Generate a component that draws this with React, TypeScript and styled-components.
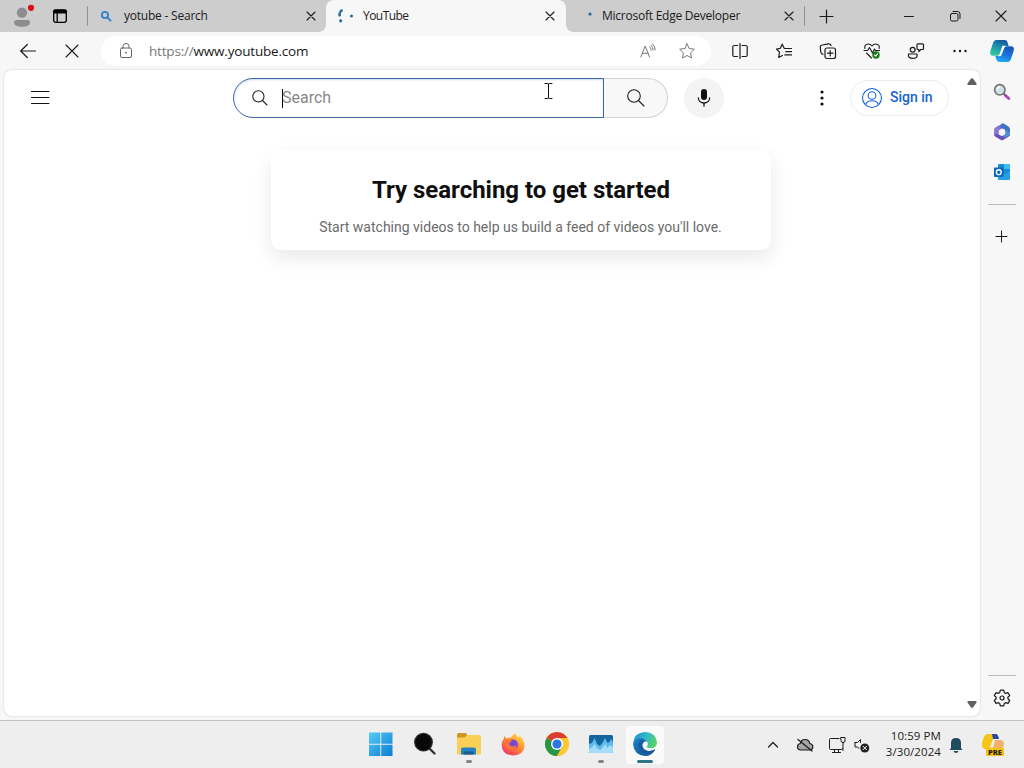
import React from 'react';
import styled, { createGlobalStyle } from 'styled-components';

const GlobalStyle = createGlobalStyle`
    * {
        box-sizing: border-box;
    }
    body {
        margin: 0;
        overflow: hidden;
        background: #f7f7f7;
        font-family: "Open Sans", "Noto Sans", sans-serif;
        color: #1b1b1b;
    }
    svg {
        display: block;
        flex: none;
        overflow: visible;
    }
`

const Screen = styled.div`
    width: 1024px;
    height: 768px;
    display: flex;
    flex-direction: column;
`

/* every icon sits in a fixed cell so the bars keep their rhythm */
const Cell = styled.div<{ $w: number; $h?: number }>`
    width: ${p => p.$w}px;
    height: ${p => (p.$h ? `${p.$h}px` : 'auto')};
    flex: none;
    display: flex;
    align-items: center;
    justify-content: center;
`

const TabStrip = styled.div`
    height: 32px;
    flex: none;
    display: flex;
    align-items: center;
    background: #cdcdcd;
`

const StripDivider = styled.div`
    width: 1px;
    height: 20px;
    background: #929292;
`

const Tab = styled.div<{ $w: number; $active?: boolean }>`
    position: relative;
    width: ${p => p.$w}px;
    height: 32px;
    flex: none;
    display: flex;
    align-items: center;
    padding-right: 7px;
    background: ${p => (p.$active ? '#f7f7f7' : 'transparent')};
    border-radius: 8px 8px 0 0;

    &::before, &::after {
        content: '';
        display: ${p => (p.$active ? 'block' : 'none')};
        position: absolute;
        bottom: 0;
        width: 7px;
        height: 7px;
    }
    &::before {
        left: -7px;
        background: radial-gradient(circle at 0 0, transparent 6.5px, #f7f7f7 7px);
    }
    &::after {
        right: -7px;
        background: radial-gradient(circle at 100% 0, transparent 6.5px, #f7f7f7 7px);
    }
`

const TabTitle = styled.span<{ $tight?: number }>`
    flex: 1;
    font-size: 12px;
    line-height: 16px;
    letter-spacing: ${p => p.$tight ?? 0}px;
    white-space: nowrap;
`

const Toolbar = styled.div`
    height: 38px;
    flex: none;
    display: flex;
    align-items: center;
    padding-left: 6px;
    background: #f7f7f7;
`

const AddressBar = styled.div`
    width: 610px;
    height: 30px;
    margin: 0 7px 0 7px;
    display: flex;
    align-items: center;
    border-radius: 15px;
    background: #fff;
`

const Url = styled.span`
    flex: 1;
    margin-left: -2px;
    font-size: 13.5px;
    line-height: 20px;
    letter-spacing: -0.19px;
    white-space: nowrap;

    em {
        font-style: normal;
        color: #767676;
    }
`

const Main = styled.div`
    flex: 1;
    min-height: 0;
    display: flex;
    padding-left: 4px;
    background: #f7f7f7;
`

const Page = styled.div`
    position: relative;
    width: 976px;
    margin-bottom: 4px;
    flex: none;
    display: flex;
    border-radius: 8px;
    background: #fff;
    box-shadow: 0 0 2px rgba(0, 0, 0, 0.22);
    font-family: Roboto, sans-serif;
`

const PageBody = styled.div`
    flex: 1;
    display: flex;
    flex-direction: column;
`

const Masthead = styled.header`
    height: 56px;
    display: flex;
    align-items: center;
    padding-left: 16px;
`

const SearchForm = styled.div`
    display: flex;
    height: 40px;
    margin-left: 173px;
`

const SearchInput = styled.div`
    width: 371px;
    display: flex;
    align-items: center;
    border: 1px solid #3c66a6;
    border-radius: 20px 0 0 20px;
    background: #fff;
    box-shadow: inset 0 1px 2px #c9dcf0;
    font-size: 16px;
    line-height: 24px;
    color: #888;
`

const Caret = styled.i`
    width: 1px;
    height: 19px;
    margin-right: -1px;
    background: #000;
`

const SearchButton = styled.div`
    width: 64px;
    display: flex;
    align-items: center;
    justify-content: center;
    border: 1px solid #d3d3d3;
    border-left: 0;
    border-radius: 0 20px 20px 0;
    background: #f8f8f8;
`

const MicButton = styled.div`
    width: 40px;
    height: 40px;
    margin-left: 16px;
    display: flex;
    align-items: center;
    justify-content: center;
    border-radius: 50%;
    background: #f4f4f4;
`

const SignIn = styled.div`
    width: 99px;
    height: 36px;
    margin-left: 8px;
    padding-left: 9px;
    display: flex;
    align-items: center;
    gap: 6px;
    border: 1px solid #ececec;
    border-radius: 18px;
    font-size: 14px;
    font-weight: 500;
    line-height: 34px;
    color: #1363d2;

    span {
        margin-top: -2px;
    }
`

const Card = styled.section`
    width: 500px;
    height: 100px;
    margin: 24px 0 0 267px;
    padding-top: 22px;
    border-radius: 10px;
    background: #fff;
    box-shadow: 0 8px 20px rgba(0, 0, 0, 0.09);
    text-align: center;

    h1 {
        margin: 0;
        font-size: 24px;
        line-height: 36px;
        font-weight: 700;
        letter-spacing: -0.02px;
        color: #0f0f0f;
    }
    p {
        margin: 8px 0 0 -1px;
        font-size: 14px;
        line-height: 22px;
        color: #6b6b6b;
    }
`

const Scrollbar = styled.div`
    width: 16px;
    display: flex;
    flex-direction: column;
    justify-content: space-between;
    align-items: center;
    padding: 8px 0;
`

const Pointer = styled.div`
    position: absolute;
    left: 540px;
    top: 13px;
`

const Sidebar = styled.aside`
    flex: 1;
    display: flex;
    flex-direction: column;
    align-items: center;
    padding-top: 2px;
`

const SideDivider = styled.div`
    width: 28px;
    height: 1px;
    flex: none;
    background: #bdbdbd;
`

const Spacer = styled.div`
    flex: 1;
`

const Taskbar = styled.footer`
    height: 48px;
    flex: none;
    display: flex;
    align-items: center;
    padding-left: 359px;
    border-top: 1px solid #c2c2c2;
    background: #eee;
`

const TaskButton = styled.div<{ $active?: boolean }>`
    width: 38px;
    height: 38px;
    margin: 0 3px;
    display: flex;
    flex-direction: column;
    align-items: center;
    padding-top: 6px;
    border-radius: 4px;
    background: ${p => (p.$active ? '#fafafa' : 'transparent')};
`

const Indicator = styled.i<{ $state?: string }>`
    width: ${p => (p.$state === 'active' ? 16 : 6)}px;
    height: 3px;
    margin-top: 4px;
    border-radius: 2px;
    background: ${p => (p.$state === 'active' ? '#2b7489' : p.$state === 'open' ? '#858585' : 'transparent')};
`

const Clock = styled.div`
    width: 67px;
    margin-top: -2px;
    font-size: 11.5px;
    line-height: 16px;
    letter-spacing: 0.08px;
    text-align: right;
    white-space: nowrap;
`

type IconProps = {
    w?: number
    h?: number
    color?: string
    sw?: number
    children: React.ReactNode
}

function Icon({ w = 16, h = w, color = '#1b1b1b', sw = 1, children }: IconProps) {
    return (
        <svg width={w} height={h} viewBox={`0 0 ${w} ${h}`} fill="none" stroke={color} strokeWidth={sw} strokeLinecap="round" strokeLinejoin="round">
            {children}
        </svg>
    )
}

const Cross = ({ size = 8, sw = 1.1 }: { size?: number; sw?: number }) => (
    <Icon w={size} sw={sw}><path d={`M0 0L${size} ${size}M${size} 0L0 ${size}`} /></Icon>
)

const STAR = 'M8 .8l2.2 4.7 5.1.7-3.7 3.6.9 5.2L8 12.5 3.5 15l.9-5.2L.7 6.2l5.1-.7z'

function BrowserTabs() {
    return (
        <TabStrip>
            <Cell $w={46}>
                <Icon w={20} h={22} color="none">
                    <circle cx="9" cy="7.6" r="5.2" fill="#8d8d8d" />
                    <path d="M1 17.500q0-2.500 2.500-2.500h11q2.500 0 2.500 2.500c0 3-4 4.300-8 4.300s-8-1.300-8-4.300z" fill="#8d8d8d" />
                    <circle cx="18" cy="2.800" r="3.100" fill="#d80d1e" />
                </Icon>
            </Cell>
            <Cell $w={28}>
                <Icon w={14} h={14} sw={1.3} color="#000">
                    <rect x=".7" y=".9" width="12.6" height="12.4" rx="2" />
                    <path d="M1 1.300h12v2.600H1z" fill="#000" />
                    <path d="M4.200 4v9" />
                </Icon>
            </Cell>
            <Cell $w={13} />
            <StripDivider />
            <Tab $w={238}>
                <Cell $w={36}>
                    <Icon w={10} sw={1.900} color="#3b7fcf"><circle cx="4" cy="4" r="3.100" /><path d="M6.300 6.300l3.300 3.300" /></Icon>
                </Cell>
                <TabTitle $tight={-0.22}>yotube - Search</TabTitle>
                <Cell $w={16}><Cross /></Cell>
            </Tab>
            <Tab $w={240} $active>
                <Cell $w={37}>
                    <Icon w={16} sw={2.600} color="#246b99">
                        <path d="M4.600 2.700L3.600 3.300M2.600 5.600L2.700 7.300" />
                        <circle cx="3.700" cy="12.800" r="1.600" fill="#246b99" stroke="none" />
                        <circle cx="14.500" cy="8" r="1.500" fill="#246b99" stroke="none" />
                    </Icon>
                </Cell>
                <TabTitle $tight={-0.55}>YouTube</TabTitle>
                <Cell $w={18}><Cross /></Cell>
            </Tab>
            <Tab $w={238}>
                <Cell $w={36}>
                    <Icon w={16}><circle cx="14" cy="6" r="1.600" fill="#20689b" stroke="none" /></Icon>
                </Cell>
                <TabTitle $tight={-0.24}>Microsoft Edge Developer</TabTitle>
                <Cell $w={16}><Cross /></Cell>
            </Tab>
            <StripDivider />
            <Cell $w={43}><Icon w={13} sw={1.200}><path d="M6.500 0v13M0 6.500h13" /></Icon></Cell>
            <Spacer />
            <Cell $w={46}><Icon w={10}><path d="M.5 5.500h9" /></Icon></Cell>
            <Cell $w={46}>
                <Icon w={10}><rect x=".5" y="2.500" width="7.500" height="7.500" rx="1.500" /><path d="M3 .5h4.500q2.500 0 2.500 2.500v4.500" /></Icon>
            </Cell>
            <Cell $w={46}><Cross size={10} /></Cell>
        </TabStrip>
    )
}

function BrowserToolbar() {
    return (
        <Toolbar>
            <Cell $w={44}><Icon w={16} sw={1.200}><path d="M15.500 8H.7M7.300 1.500L.7 8l6.600 6.500" /></Icon></Cell>
            <Cell $w={44}><Cross size={12} /></Cell>
            <AddressBar>
                <Cell $w={50}>
                    <Icon w={12} h={16} color="#666">
                        <rect x=".5" y="5" width="11" height="9.500" rx="1.500" />
                        <path d="M3 5V3.300q0-2.800 3-2.800t3 2.800V5" />
                        <circle cx="6" cy="9.700" r=".5" fill="#666" />
                    </Icon>
                </Cell>
                <Url><em>https://</em>www.youtube.com</Url>
                <Cell $w={41}>
                    <Icon w={16} color="#777">
                        <path d="M.8 14L5.200 3l4.400 11M2.500 10.300h5.600M9.800 4q1.400 1.200 1.400 3.200M11 2.300q2.200 1.900 2.200 4.700M12.500.8q2.700 2.400 2.700 6" />
                    </Icon>
                </Cell>
                <Cell $w={37}><Icon color="#777"><path d={STAR} /></Icon></Cell>
                <Cell $w={6} />
            </AddressBar>
            <Cell $w={43}>
                <Icon w={16} sw={1.200}>
                    <path d="M5.500 2.500H2.300q-1.500 0-1.500 1.500v8q0 1.500 1.500 1.500h3.200M10 2.500h3.700q1.500 0 1.500 1.500v8q0 1.500-1.500 1.500H10M8 .5v15" />
                </Icon>
            </Cell>
            <Cell $w={45}>
                <Icon w={16} sw={1.200}>
                    <path d="M9.700 5.500L8.200 5.300 6.200 1.200 4.300 5.300.5 6l3 3.200-.8 5.300 3.700-2M9.800 5.500h5.700M9.800 8.700h5.700M8.800 11.900h6.700" />
                </Icon>
            </Cell>
            <Cell $w={44}>
                <Icon w={16} sw={1.200}>
                    <rect x="5" y="5" width="10.500" height="10.500" rx="2" />
                    <path d="M10.200 7.500v5.500M7.500 10.200H13M3 11.400Q1 11 .7 8.500L.3 4.500Q.2 2.300 2.300 2L8.500.8q2-.2 2.600 1.700" />
                </Icon>
            </Cell>
            <Cell $w={44}>
                <Icon w={16} sw={1.100}>
                    <path d="M.9 5.500Q0 2 3.200 1.200 6 .5 8 3q2-2.500 4.800-1.800 3.200.8 2.300 4.300M0 7.500h3.500l2-3 3 5.500 2-4 1 1.500H15.500M2.500 10l5 5" />
                    <circle cx="12" cy="12" r="3.700" fill="#187b18" stroke="none" />
                    <path d="M10.500 12l1.100 1.200 2-2.300" stroke="#fff" />
                </Icon>
            </Cell>
            <Cell $w={44}>
                <Icon w={16} sw={1.200}>
                    <circle cx="4.700" cy="6.800" r="2.400" />
                    <path d="M.5 11h8.600v1.200q0 3.200-4.300 3.200T.5 12.200zM9 1.800q0-1 1-1h4.500q1 0 1 1v3.700q0 1-1 1h-1.700l-2 2V6.500H10q-1 0-1-1z" />
                </Icon>
            </Cell>
            <Cell $w={44}>
                <Icon w={14} h={4} color="none"><g fill="#1b1b1b"><circle cx="1.500" cy="2" r="1.200" /><circle cx="7" cy="2" r="1.200" /><circle cx="12.500" cy="2" r="1.200" /></g></Icon>
            </Cell>
            <Cell $w={40}><CopilotLogo /></Cell>
        </Toolbar>
    )
}

function CopilotLogo() {
    return (
        <svg width="24" height="22" viewBox="0 0 24 22">
            <defs>
                <linearGradient id="cpA" x1=".6" y1="0" x2=".2" y2="1"><stop offset="0" stopColor="#155a9c" /><stop offset=".4" stopColor="#1b8fae" /><stop offset="1" stopColor="#35cf9c" /></linearGradient>
                <linearGradient id="cpB" x1=".6" y1="0" x2=".3" y2="1"><stop offset="0" stopColor="#1b53b8" /><stop offset=".5" stopColor="#1870df" /><stop offset="1" stopColor="#22aef2" /></linearGradient>
            </defs>
            <path d="M6.500 0h8.300q2 0 2.700 2.300L18.700 6H15q-2.300 0-3 2.300l-2 5.200q-.8 2.300-3 2.300H3.200Q-.8 15.800.3 11.300L3 3Q4 0 6.500 0z" fill="url(#cpA)" />
            <path d="M17.500 22H9.200q-2 0-2.700-2.300L5.300 16H9q2.300 0 3-2.300l2-5.200q.8-2.300 3-2.300h3.800q4 0 2.900 4.500L21 19q-1 3-3.500 3z" fill="url(#cpB)" />
            <path d="M12.300 5.800h3.200q-1.200.8-1.700 2.400l-2 5.800q-.5 1.500-1.500 2.200H8.200q1-.8 1.400-2l2-6q.3-1.300.7-2.400z" fill="#f4fafa" />
        </svg>
    )
}

function YouTubePage() {
    return (
        <Page>
            <PageBody>
                <Masthead>
                    <Cell $w={40} $h={40}>
                        <Icon w={18} h={14} color="#111"><path d="M.5 .5h17.500M.5 6.500h17.500M.5 12.500h17.500" /></Icon>
                    </Cell>
                    <SearchForm>
                        <SearchInput>
                            <Cell $w={48}>
                                <Cell $w={3} />
                                <Icon w={16} color="#222" sw={1.100}><circle cx="6.400" cy="6.400" r="5.600" /><path d="M10.500 10.500l4.500 4.500" /></Icon>
                            </Cell>
                            <Caret />
                            Search
                        </SearchInput>
                        <SearchButton><Icon w={18} sw={1.100}><circle cx="7" cy="7" r="6.300" /><path d="M11.500 11.500l5.500 5.500" /></Icon></SearchButton>
                    </SearchForm>
                    <MicButton>
                        <Icon w={16} h={20} sw={1.300} color="#111">
                            <rect x="5" y="1" width="6" height="11" rx="3" fill="#111" stroke="none" />
                            <path d="M2.300 9.500c0 7.300 11.400 7.300 11.400 0M8 15v3.500" strokeLinecap="butt" />
                        </Icon>
                    </MicButton>
                    <Cell $w={78} />
                    <Cell $w={40}>
                        <Icon w={4} h={16} color="none"><g fill="#111"><circle cx="2" cy="2" r="1.600" /><circle cx="2" cy="8" r="1.600" /><circle cx="2" cy="14" r="1.600" /></g></Icon>
                    </Cell>
                    <SignIn>
                        <Icon w={24} color="#1363d2" sw={1.100}>
                            <circle cx="12" cy="12" r="9.500" />
                            <circle cx="12" cy="9.500" r="3.800" />
                            <path d="M5.500 18.500q1.600-3.700 6.500-3.700t6.500 3.700" />
                        </Icon>
                        <span>Sign in</span>
                    </SignIn>
                </Masthead>
                <Card>
                    <h1>Try searching to get started</h1>
                    <p>Start watching videos to help us build a feed of videos you'll love.</p>
                </Card>
            </PageBody>
            <Scrollbar>
                <Icon w={10} h={7} color="none"><path d="M3.800.8q1.200-1.300 2.400 0l3.300 4.700q.5 1.500-.7 1.500H1.200Q0 7 .5 5.500z" fill="#606060" /></Icon>
                <Icon w={10} h={8} color="none"><path d="M3.800 7.200q1.200 1.300 2.400 0l3.300-4.700Q10 1 8.800 1H1.200Q0 1 .5 2.500z" fill="#606060" /></Icon>
            </Scrollbar>
            <Pointer>
                <Icon w={8} h={16} color="#111"><path d="M1 .5h2q1 0 1.500.7.5-.7 1.500-.7h2M4.500 1v14M1 15.500h2q1 0 1.500-.7.5.7 1.500.7h2" /></Icon>
            </Pointer>
        </Page>
    )
}

function EdgeSidebar() {
    return (
        <Sidebar>
            <Cell $w={40} $h={40}>
                <svg width="18" height="18" viewBox="0 0 18 18">
                    <path d="M12.500 12.500l3.300 3" stroke="#b044c8" strokeWidth="3" strokeLinecap="round" />
                    <path d="M10.500 10.500l2 2" stroke="#666" strokeWidth="1.800" />
                    <circle cx="6.800" cy="6.800" r="5.200" fill="#cfe0e8" stroke="#737373" strokeWidth="1.600" />
                    <path d="M4 6.500q.7-2.500 3.200-2.700" stroke="#fff" strokeWidth="1.300" fill="none" />
                </svg>
            </Cell>
            <Cell $w={40} $h={40}>
                <svg width="16" height="18" viewBox="0 0 16 18">
                    <path d="M8.500.5L2 3.900Q0 5 0 7v5l5 2.500V7.500l6.300-3.700z" fill="#8b76d4" />
                    <path d="M8 .5q1-.4 2 .2l4.500 2.800Q16 4.500 16 6.500v6l-5-1.700v-4L5.500 4z" fill="#3f74c4" />
                    <path d="M0 11.500q0 1.500 1.500 2.300l5 3q1.500 1 3 0l5-3Q16 13 16 11V9l-5 2.500-3 1.500-4-2z" fill="#6a52bd" />
                    <path d="M11 7l5 2.500V12l-5 2.500-3-2z" fill="#4f8fdc" />
                    <path d="M8 5.800l3.200 1.800v3.600L8 13l-3.200-1.800V7.600z" fill="#f7f7f7" />
                </svg>
            </Cell>
            <Cell $w={40} $h={40}>
                <svg width="16" height="16" viewBox="0 0 16 16">
                    <rect x="4" width="12" height="13" rx="1" fill="#178bd6" />
                    <path d="M10 0h5q1 0 1 1v4h-6z" fill="#3ebdf0" />
                    <path d="M4 7l6 3.500L16 7v8q0 1-1 1H5q-1 0-1-1z" fill="#23a1e4" />
                    <rect y="3.500" width="9.500" height="9.500" rx="1" fill="#0967b5" />
                    <circle cx="4.800" cy="8.200" r="2.400" fill="none" stroke="#fff" strokeWidth="1.400" />
                </svg>
            </Cell>
            <Cell $w={40} $h={12} />
            <SideDivider />
            <Cell $w={40} $h={63}><Icon w={12} h={12}><path d="M5.500 0v11M0 5.500h11" /></Icon></Cell>
            <Spacer />
            <SideDivider />
            <Cell $w={40} $h={44}>
                <Icon w={18} sw={1.200}>
                    <path d="M7.300 1.200h3.400l.6 2.400 1.300.8 2.400-.7 1.700 2.900-1.800 1.700v1.500l1.800 1.700-1.700 2.900-2.400-.7-1.300.8-.6 2.400H7.300l-.6-2.400-1.300-.8-2.400.7-1.700-2.900 1.800-1.700V8.300L1.300 6.600 3 3.700l2.400.7 1.300-.8z" />
                    <circle cx="9" cy="9" r="2" />
                </Icon>
            </Cell>
        </Sidebar>
    )
}

const WindowsLogo = () => (
    <svg width="24" height="24" viewBox="0 0 24 24">
        <defs><linearGradient id="win" gradientUnits="userSpaceOnUse" x1="0" y1="0" x2="24" y2="24"><stop stopColor="#58cdf8" /><stop offset="1" stopColor="#087bd0" /></linearGradient></defs>
        <path d="M0 .5h11.300v11.300H0zM12.200 .5h11.300v11.300H12.200zM0 12.700h11.300V24H0zM12.200 12.700h11.300V24H12.200z" fill="url(#win)" />
    </svg>
)

const SearchLogo = () => (
    <svg width="24" height="24" viewBox="0 0 24 24">
        <path d="M16.500 16.500l5 5" stroke="#333" strokeWidth="2.400" strokeLinecap="round" />
        <circle cx="10.500" cy="10.200" r="8.800" fill="#080808" stroke="#2c2c2c" strokeWidth="1.200" />
    </svg>
)

const FolderLogo = () => (
    <svg width="26" height="24" viewBox="0 0 26 24">
        <path d="M1 2.500Q1 1 2.500 1h7Q11 1 11 2.500V8H1z" fill="#cf9722" />
        <path d="M1 5.500h7.500L11.500 3h12Q25 3 25 4.500V21q0 1.500-1.500 1.500h-21Q1 22.500 1 21z" fill="#f9cf55" />
        <path d="M5 22.500V17.500q0-2 2-2h11q2 0 2 2v5z" fill="#2581c4" />
        <path d="M7.500 19.500h10v3h-10z" fill="#145b96" />
    </svg>
)

const FirefoxLogo = () => (
    <svg width="24" height="24" viewBox="0 0 24 24">
        <defs>
            <linearGradient id="fx" x1=".85" y1="0" x2=".2" y2="1"><stop stopColor="#ffe94a" /><stop offset=".45" stopColor="#ff922b" /><stop offset="1" stopColor="#f5306a" /></linearGradient>
        </defs>
        <path d="M3.500 4l2 2.500Q8 5 10 5.500 11 3 15 1q0 3 3 4.500l.5-2Q23.500 8 23.500 13.500 23 23 12 23.500 1 23 .7 13q0-4 2-6z" fill="url(#fx)" />
        <circle cx="12" cy="12.500" r="5" fill="#7548d5" />
        <path d="M4.500 9q3.500-2.500 6-.5.500 2-2.500 2.500.5 3.500 4 3.500 2.500 0 3.500-2Q15.500 18 11 18q-6-.5-6.500-6z" fill="#ff7438" />
    </svg>
)

const ChromeLogo = () => (
    <svg width="24" height="24" viewBox="0 0 24 24">
        <circle cx="12" cy="12" r="12" fill="#fcc934" />
        <path d="M12 12L1.600 6A12 12 0 0 1 22.400 6z" fill="#dc3e31" />
        <path d="M1.600 6A12 12 0 0 0 12 24L17.200 15 12 12z" fill="#279547" />
        <path d="M12 6h10.400A12 12 0 0 1 12 24l5.200-9z" fill="#fcc934" />
        <circle cx="12" cy="12" r="6" fill="#fff" />
        <circle cx="12" cy="12" r="4.600" fill="#2f74e4" />
    </svg>
)

const MonitorLogo = () => (
    <svg width="24" height="20" viewBox="0 0 24 20">
        <rect width="24" height="18" rx="1.500" y="1" fill="#14659f" />
        <path d="M0 10l3-1 2.500-5L8 10l3 2 3-4 2-4 2.500 5 2-1L22 5l2 3v10.500H0z" fill="#5bbcec" />
        <path d="M0 15l3-1.500L5.500 10 8 14l3 2 3-3 2-3 2.500 4 2.500-3 3 2v4.500q0 1.500-1.500 1.500h-21Q0 19 0 17.500z" fill="#a5dcf8" />
    </svg>
)

const EdgeLogo = () => (
    <svg width="24" height="24" viewBox="0 0 24 24">
        <defs>
            <linearGradient id="edA" x1="0" y1=".3" x2="1" y2=".6"><stop stopColor="#1f91d1" /><stop offset=".5" stopColor="#31b9cb" /><stop offset="1" stopColor="#5bd45c" /></linearGradient>
            <linearGradient id="edB" x1="0" y1="0" x2="1" y2="1"><stop stopColor="#1883ce" /><stop offset="1" stopColor="#144f91" /></linearGradient>
        </defs>
        <path d="M0 11Q1 .5 12 0q11 .5 12 10.500-.3 5.500-6 5.800-4.500-.1-4.300-2 2.300-2.300 0-4.800Q7 4 0 11z" fill="url(#edA)" />
        <path d="M0 12q2-6 8-5.800 4 .2 5.800 3.300-4.300-.7-4.600 3.500Q9.500 18 15 19q4 .4 7.300-1.700Q19 24 12 24 1 23 0 12z" fill="url(#edB)" />
        <path d="M8.500 7.800Q3.500 12 7 18q2.500 4.500 7 5.700 5.500-1 8.300-6.400Q19 19.500 15 19q-5.500-1-5.800-6 .3-2.500 2.300-3.400-1-1.500-3-1.800z" fill="#185b9d" />
    </svg>
)

const tasks = [
    { logo: <WindowsLogo /> },
    { logo: <SearchLogo /> },
    { logo: <FolderLogo />, state: 'open' },
    { logo: <FirefoxLogo /> },
    { logo: <ChromeLogo /> },
    { logo: <MonitorLogo />, state: 'open' },
    { logo: <EdgeLogo />, state: 'active' },
]

function WindowsTaskbar() {
    return (
        <Taskbar>
            {tasks.map((task, i) => (
                <TaskButton key={i} $active={task.state === 'active'}>
                    <Cell $w={26} $h={24}>{task.logo}</Cell>
                    <Indicator $state={task.state} />
                </TaskButton>
            ))}
            <Spacer />
            <Cell $w={28}><Icon w={10} h={6} sw={1.200}><path d="M.5 5L5 .5 9.500 5" /></Icon></Cell>
            <Cell $w={36}>
                <Icon w={18} h={16} sw={1.200}>
                    <path d="M5 13Q1.500 13 1.500 9.800 1.500 6.800 4.300 6.500 5 2.500 9 2.500t4.800 4q3 .3 3 3.300 0 3.200-3.300 3.200z" fill="#a5a5a5" />
                    <path d="M2 2.500l14 11.500" />
                </Icon>
            </Cell>
            <Cell $w={27}>
                <Icon w={16} h={16}>
                    <path d="M10 1.500H1.500Q.5 1.500.500 2.500v9q0 1 1 1h11q1 0 1-1M5.500 12.500v3M9.500 12.500v3M3.500 15.500h8M12 .5h4v3.500q0 1.500-2 1.500t-2-1.500zM14 5.500v8" />
                </Icon>
            </Cell>
            <Cell $w={24}>
                <Icon w={16} h={16}>
                    <path d="M1 5.500h2.500L6.500 2.500v3M1 5.500v4.500h2.500L5 11.500" />
                    <circle cx="10.800" cy="11" r="4.500" fill="#222" stroke="none" />
                    <path d="M9.100 9.300l3.400 3.400M12.500 9.300l-3.400 3.400" stroke="#fff" />
                </Icon>
            </Cell>
            <Clock>10:59 PM<br />3/30/2024</Clock>
            <Cell $w={30}>
                <Icon w={14} h={16} color="none">
                    <path d="M2 11V6q0-5 5-5t5 5v5l1.500 2H.5zM4.500 14h5q-.5 2-2.500 2t-2.500-2z" fill="#204c60" />
                </Icon>
            </Cell>
            <Cell $w={44}>
                <svg width="24" height="24" viewBox="0 0 24 24">
                    <path d="M7 1h7L9 14q-1 3-5 2-4-1-3-6l1.500-5Q4 1 7 1z" fill="#f6c516" />
                    <path d="M11 1h4q2 0 3 5h-6z" fill="#2848a4" />
                    <path d="M14 7h6q4 1 2.500 6-1 4-5 4h-6z" fill="#f4b070" />
                    <rect x="5" y="14.500" width="18" height="8.500" rx="1.500" fill="#f4c216" />
                    <text x="14" y="21.600" fontSize="7.500" fontWeight="800" fontFamily="Open Sans, sans-serif" textAnchor="middle" fill="#2c2509">PRE</text>
                </svg>
            </Cell>
            <Cell $w={9} />
        </Taskbar>
    )
}

export default function App() {
    return (
        <Screen>
            <GlobalStyle />
            <BrowserTabs />
            <BrowserToolbar />
            <Main>
                <YouTubePage />
                <EdgeSidebar />
            </Main>
            <WindowsTaskbar />
        </Screen>
    );
}
